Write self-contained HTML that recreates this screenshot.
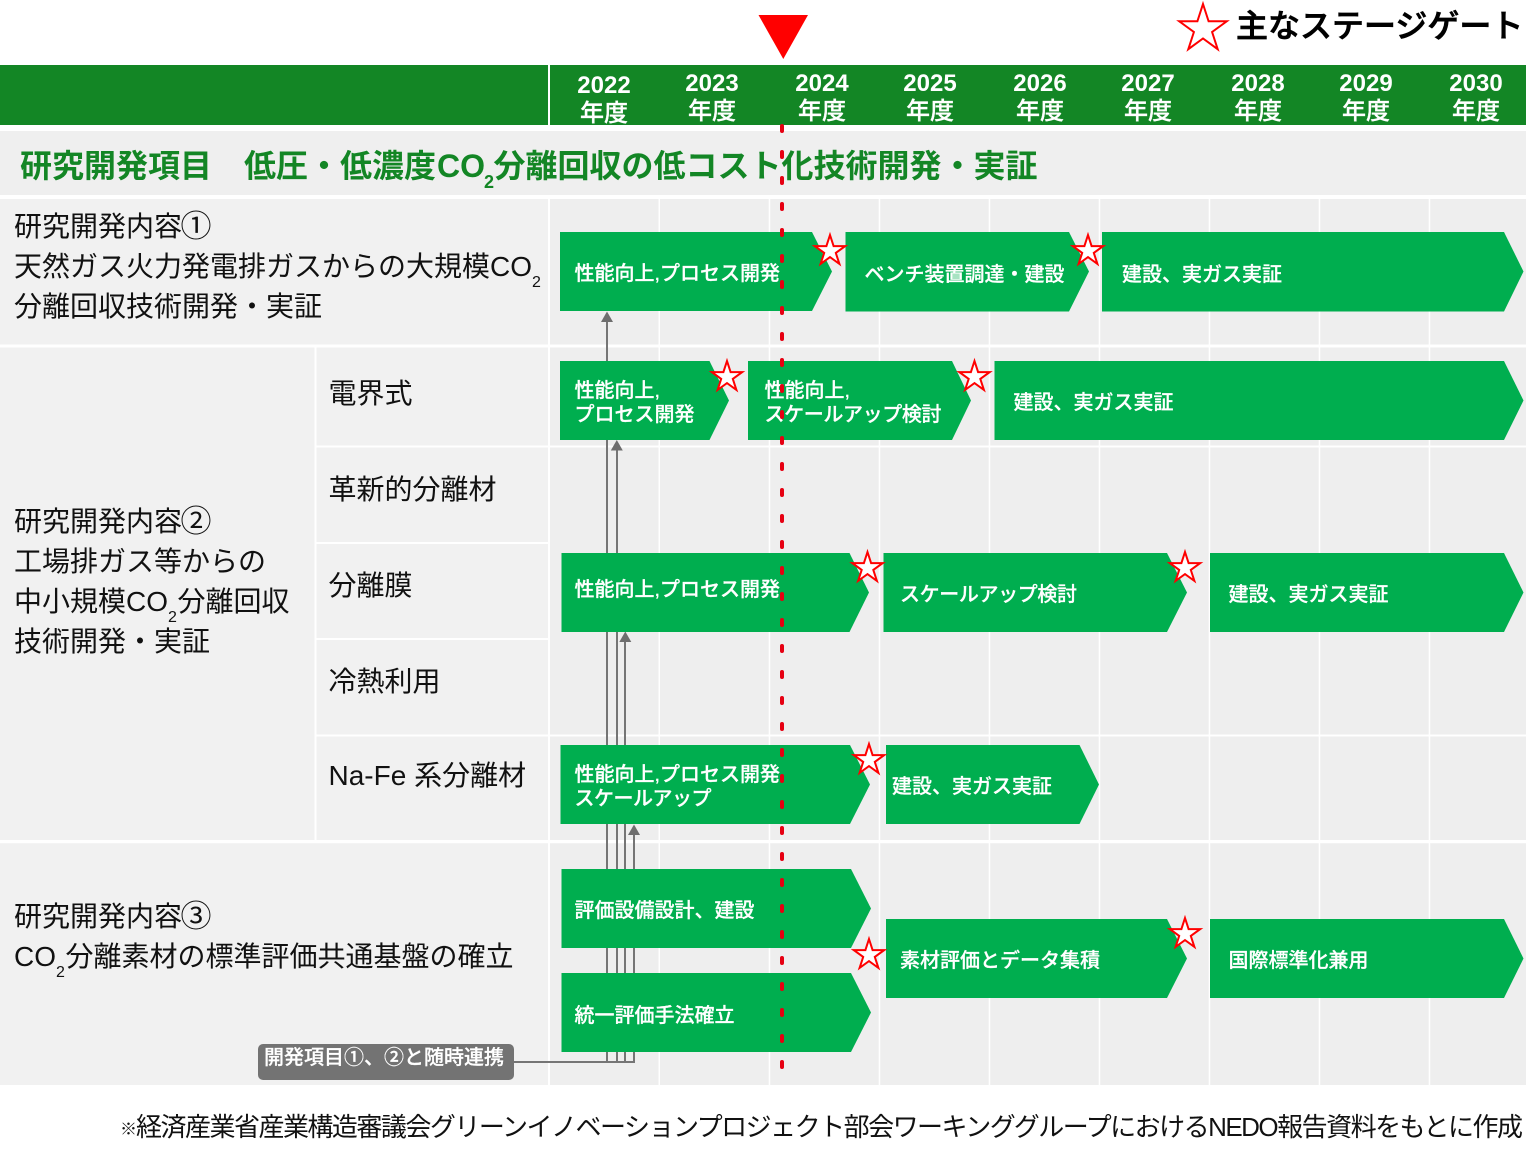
<!DOCTYPE html>
<html lang="ja">
<head>
<meta charset="utf-8">
<title>研究開発項目</title>
<style>
html,body{margin:0;padding:0;background:#fff;width:1527px;height:1172px;overflow:hidden}
svg{display:block}
text{font-family:"Liberation Sans","Noto Sans CJK JP",sans-serif;white-space:pre}
.y{font-size:24px;font-weight:700;fill:#fff;text-anchor:middle}
.n{font-size:24px;font-weight:500;fill:#fff;stroke:#fff;stroke-width:.3;text-anchor:middle}
.t{font-size:32px;font-weight:700;fill:#138625}
.l{font-size:28px;fill:#111}
.c{font-size:31px;fill:#111}
.s{font-size:16px;fill:#111}
.w{font-size:20px;font-weight:500;fill:#fff;stroke:#fff;stroke-width:.25}
.star{fill:#fff;stroke:#f00;stroke-width:2;stroke-miterlimit:10}
.chev{fill:#00ae4f}
</style>
</head>
<body>
<svg width="1527" height="1172" viewBox="0 0 1527 1172" xmlns="http://www.w3.org/2000/svg">
<rect width="1527" height="1172" fill="#fff"/>
<!-- header -->
<rect x="0" y="65" width="1526" height="60" fill="#138625"/>
<rect x="548" y="65" width="2" height="60" fill="#fff"/>
<polygon points="758.5,15 808,15 783.3,59" fill="#f00"/>
<!-- title band -->
<rect x="0" y="131" width="1526" height="64" fill="#efefef"/>
<!-- body backgrounds -->
<rect x="0" y="199" width="549" height="886" fill="#f1f1f1"/>
<rect x="549" y="199" width="977" height="886" fill="#eeeeee"/>
<!-- grid -->
<g fill="#fff">
<rect x="548" y="199" width="2" height="886"/>
<rect x="658.5" y="199" width="1.5" height="886"/>
<rect x="768.7" y="199" width="1.5" height="886"/>
<rect x="878.7" y="199" width="1.5" height="886"/>
<rect x="988.7" y="199" width="1.5" height="886"/>
<rect x="1098.7" y="199" width="1.5" height="886"/>
<rect x="1208.7" y="199" width="1.5" height="886"/>
<rect x="1318.7" y="199" width="1.5" height="886"/>
<rect x="1428.7" y="199" width="1.5" height="886"/>
<rect x="0" y="344.5" width="1526" height="3"/>
<rect x="0" y="840" width="1526" height="3.2"/>
<rect x="314.5" y="347" width="2" height="494"/>
<rect x="316" y="445.5" width="1210" height="2"/>
<rect x="316" y="542" width="233" height="2"/>
<rect x="316" y="638" width="233" height="2"/>
<rect x="316" y="734.5" width="1210" height="2"/>
</g>
<!-- connectors -->
<g stroke="#757575" stroke-width="2" fill="none">
<path d="M514 1062H635"/>
<path d="M607 1062V320"/>
<path d="M617 1062V449"/>
<path d="M625 1062V640"/>
<path d="M634 1062V833"/>
</g>
<g fill="#6e6e6e">
<polygon points="607,311.5 601,322 613,322"/>
<polygon points="616.8,440 610.8,450.5 622.8,450.5"/>
<polygon points="625.3,631.5 619.3,642 631.3,642"/>
<polygon points="634,824.5 628,835 640,835"/>
</g>
<!-- chevrons -->
<g class="chev">
<polygon points="560,232 812,232 832,271.5 812,311 560,311"/>
<polygon points="845.5,232 1069,232 1089,271.5 1069,311.5 845.5,311.5"/>
<polygon points="1102,232 1504,232 1523.5,271.5 1504,311.5 1102,311.5"/>
<polygon points="560,361 709.5,361 729,400.5 709.5,440 560,440"/>
<polygon points="748,361 952,361 971,400.5 952,440 748,440"/>
<polygon points="994.5,361 1504,361 1523.5,400.5 1504,440 994.5,440"/>
<polygon points="561.5,553 849.5,553 869,592.5 849.5,632 561.5,632"/>
<polygon points="883.5,553 1167,553 1187,592.5 1167,632 883.5,632"/>
<polygon points="1210,553 1504,553 1523.5,592.5 1504,632 1210,632"/>
<polygon points="560.5,745 850,745 870,784.5 850,824 560.5,824"/>
<polygon points="886,745 1079.5,745 1099,784.5 1079.5,824 886,824"/>
<polygon points="561.5,869 851,869 871,908.5 851,948 561.5,948"/>
<polygon points="561.5,973 851,973 871,1012.5 851,1052 561.5,1052"/>
<polygon points="886,919 1167,919 1187,958.5 1167,998 886,998"/>
<polygon points="1210,919 1504,919 1523.5,958.5 1504,998 1210,998"/>
</g>
<!-- label -->
<rect x="258" y="1044" width="256" height="36" rx="5" fill="#737373"/>
<text x="264" y="1064" class="w" textLength="240">開発項目①、②と随時連携</text>
<!-- header text -->
<text x="604" y="93" class="y">2022</text><text x="604" y="121" class="n">年度</text>
<text x="712" y="91" class="y">2023</text><text x="712" y="119" class="n">年度</text>
<text x="822" y="91" class="y">2024</text><text x="822" y="119" class="n">年度</text>
<text x="930" y="91" class="y">2025</text><text x="930" y="119" class="n">年度</text>
<text x="1040" y="91" class="y">2026</text><text x="1040" y="119" class="n">年度</text>
<text x="1148" y="91" class="y">2027</text><text x="1148" y="119" class="n">年度</text>
<text x="1258" y="91" class="y">2028</text><text x="1258" y="119" class="n">年度</text>
<text x="1366" y="91" class="y">2029</text><text x="1366" y="119" class="n">年度</text>
<text x="1476" y="91" class="y">2030</text><text x="1476" y="119" class="n">年度</text>
<text x="1236" y="37" font-size="32" font-weight="500" fill="#000" stroke="#000" stroke-width=".7">主なステージゲート</text>
<!-- title -->
<text x="20" y="177" class="t">研究開発項目</text>
<text x="244" y="177" class="t">低圧・低濃度</text>
<text x="437" y="177" class="t">CO</text>
<text x="484" y="188" class="t" style="font-size:18px">2</text>
<text x="493.5" y="177" class="t">分離回収の低コスト化技術開発・実証</text>
<!-- left labels -->
<text x="14" y="236" class="l">研究開発内容</text><text x="180.5" y="237" class="c">①</text>
<text x="14" y="276" class="l">天然ガス火力発電排ガスからの大規模</text>
<text x="490" y="276" class="l">CO</text><text x="532" y="287" class="s">2</text>
<text x="14" y="316" class="l">分離回収技術開発・実証</text>

<text x="14" y="531" class="l">研究開発内容</text><text x="180.5" y="532" class="c">②</text>
<text x="14" y="571" class="l">工場排ガス等からの</text>
<text x="14" y="611" class="l">中小規模</text>
<text x="126" y="611" class="l">CO</text><text x="168" y="622" class="s">2</text>
<text x="177.5" y="611" class="l">分離回収</text>
<text x="14" y="651" class="l">技術開発・実証</text>

<text x="14" y="926" class="l">研究開発内容</text><text x="180.5" y="927" class="c">③</text>
<text x="14" y="966" class="l">CO</text><text x="56" y="977" class="s">2</text>
<text x="65.5" y="966" class="l">分離素材の標準評価共通基盤の確立</text>

<text x="328.5" y="403" class="l">電界式</text>
<text x="328.5" y="499" class="l">革新的分離材</text>
<text x="328.5" y="595" class="l">分離膜</text>
<text x="328.5" y="691" class="l">冷熱利用</text>
<text x="328.5" y="785" class="l">Na-Fe 系分離材</text>
<!-- chevron text -->
<text x="574.5" y="280" class="w">性能向上,プロセス開発</text>
<text x="864.5" y="281" class="w">ベンチ装置調達・建設</text>
<text x="1122" y="281" class="w">建設、実ガス実証</text>
<text x="574.5" y="397" class="w">性能向上,</text>
<text x="574.5" y="421" class="w">プロセス開発</text>
<text x="764.5" y="397" class="w">性能向上,</text>
<text x="764.5" y="421" class="w" textLength="177">スケールアップ検討</text>
<text x="1013.5" y="409" class="w">建設、実ガス実証</text>
<text x="574.5" y="596" class="w">性能向上,プロセス開発</text>
<text x="900" y="601" class="w" textLength="177">スケールアップ検討</text>
<text x="1228.5" y="601" class="w">建設、実ガス実証</text>
<text x="574.5" y="781" class="w">性能向上,プロセス開発</text>
<text x="574.5" y="805" class="w" textLength="137">スケールアップ</text>
<text x="892" y="793" class="w">建設、実ガス実証</text>
<text x="574.5" y="917" class="w">評価設備設計、建設</text>
<text x="574.5" y="1022" class="w">統一評価手法確立</text>
<text x="900" y="967" class="w">素材評価とデータ集積</text>
<text x="1228.5" y="967" class="w">国際標準化兼用</text>
<!-- footer -->
<text x="120" y="1135" font-size="17" fill="#111">※</text>
<text x="136" y="1136" font-size="26" fill="#111" textLength="1387">経済産業省産業構造審議会グリーンイノベーションプロジェクト部会ワーキンググループにおけるNEDO報告資料をもとに作成</text>
<!-- red dashed line -->
<path d="M782 126V1070" stroke="#e60012" stroke-width="4" stroke-linecap="round" stroke-dasharray="5 21" fill="none"/>
<!-- stars -->
<polygon class="star" transform="translate(1203 29)" points="0,-25 5.6,-7.7 23.8,-7.7 9.1,3 14.7,20.2 0,9.5 -14.7,20.2 -9.1,3 -23.8,-7.7 -5.6,-7.7"/>
<g class="star">
<polygon transform="translate(830 251)" points="0,-16 3.6,-4.9 15.2,-4.9 5.8,1.9 9.4,12.9 0,6.1 -9.4,12.9 -5.8,1.9 -15.2,-4.9 -3.6,-4.9"/>
<polygon transform="translate(1088 251)" points="0,-16 3.6,-4.9 15.2,-4.9 5.8,1.9 9.4,12.9 0,6.1 -9.4,12.9 -5.8,1.9 -15.2,-4.9 -3.6,-4.9"/>
<polygon transform="translate(727 377)" points="0,-16 3.6,-4.9 15.2,-4.9 5.8,1.9 9.4,12.9 0,6.1 -9.4,12.9 -5.8,1.9 -15.2,-4.9 -3.6,-4.9"/>
<polygon transform="translate(974.5 377)" points="0,-16 3.6,-4.9 15.2,-4.9 5.8,1.9 9.4,12.9 0,6.1 -9.4,12.9 -5.8,1.9 -15.2,-4.9 -3.6,-4.9"/>
<polygon transform="translate(867.5 568)" points="0,-16 3.6,-4.9 15.2,-4.9 5.8,1.9 9.4,12.9 0,6.1 -9.4,12.9 -5.8,1.9 -15.2,-4.9 -3.6,-4.9"/>
<polygon transform="translate(1185 568)" points="0,-16 3.6,-4.9 15.2,-4.9 5.8,1.9 9.4,12.9 0,6.1 -9.4,12.9 -5.8,1.9 -15.2,-4.9 -3.6,-4.9"/>
<polygon transform="translate(869 760)" points="0,-16 3.6,-4.9 15.2,-4.9 5.8,1.9 9.4,12.9 0,6.1 -9.4,12.9 -5.8,1.9 -15.2,-4.9 -3.6,-4.9"/>
<polygon transform="translate(869 955)" points="0,-16 3.6,-4.9 15.2,-4.9 5.8,1.9 9.4,12.9 0,6.1 -9.4,12.9 -5.8,1.9 -15.2,-4.9 -3.6,-4.9"/>
<polygon transform="translate(1185 934)" points="0,-16 3.6,-4.9 15.2,-4.9 5.8,1.9 9.4,12.9 0,6.1 -9.4,12.9 -5.8,1.9 -15.2,-4.9 -3.6,-4.9"/>
</g>
</svg>
</body>
</html>
